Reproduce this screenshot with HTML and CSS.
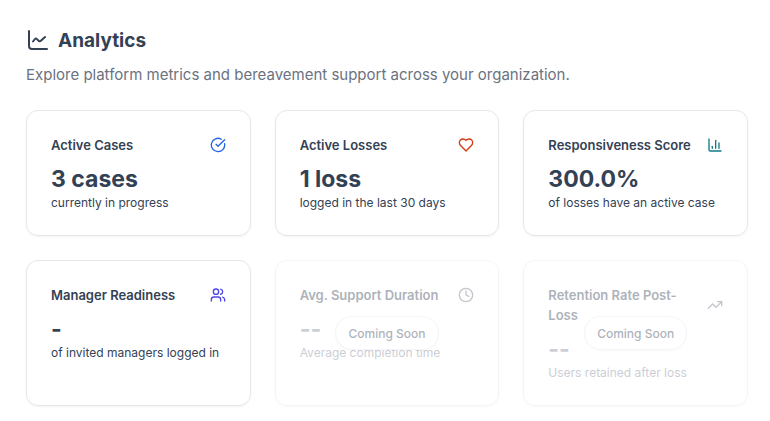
FILE: index.html
```html
<!DOCTYPE html>
<html lang="en">
<head>
<meta charset="utf-8">
<title>Analytics</title>
<link rel="stylesheet" href="styles.css">
</head>
<body>
<main class="page">
  <header class="page-header">
    <h1 class="title">
      <svg class="title-icon" viewBox="0 0 24 24"><path d="M3 2v15a3 3 0 0 0 3 3h15"/><path class="trend" d="M7 12.500l2-2.500c.5-.6 1.200-.6 1.700-.1l2.200 2.100c.5.500 1.200.5 1.700-.1L19 8"/></svg>
      Analytics
    </h1>
    <p class="subtitle">Explore platform metrics and bereavement support across your organization.</p>
  </header>
  <section class="cards">
    <article class="card">
      <div class="card-head"><h2>Active Cases</h2>
        <svg class="icon blue" viewBox="0 0 24 24"><path d="M21.801 10A10 10 0 1 1 17 3.335"/><path d="m9 11 3 3L22 4"/></svg></div>
      <p class="value">3 cases</p>
      <p class="note">currently in progress</p>
    </article>
    <article class="card">
      <div class="card-head"><h2>Active Losses</h2>
        <svg class="icon red" viewBox="0 0 24 24"><path d="M19 14c1.490-1.460 3-3.210 3-5.500A5.500 5.500 0 0 0 16.500 3c-1.760 0-3 .5-4.500 2-1.500-1.500-2.740-2-4.500-2A5.500 5.500 0 0 0 2 8.500c0 2.300 1.500 4.050 3 5.500l7 7Z"/></svg></div>
      <p class="value">1 loss</p>
      <p class="note">logged in the last 30 days</p>
    </article>
    <article class="card">
      <div class="card-head"><h2>Responsiveness Score</h2>
        <svg class="icon teal" viewBox="0 0 24 24"><path d="M3 3v16a2 2 0 0 0 2 2h16"/><path d="M18 17V9"/><path d="M13 17V5"/><path d="M8 17v-3"/></svg></div>
      <p class="value">300.0%</p>
      <p class="note">of losses have an active case</p>
    </article>
    <article class="card">
      <div class="card-head"><h2>Manager Readiness</h2>
        <svg class="icon indigo" viewBox="0 0 24 24"><path d="M16 21v-2a4 4 0 0 0-4-4H6a4 4 0 0 0-4 4v2"/><circle cx="9" cy="7" r="4"/><path d="M22 21v-2a4 4 0 0 0-3-3.870"/><path d="M16 3.130a4 4 0 0 1 0 7.750"/></svg></div>
      <p class="value">-</p>
      <p class="note">of invited managers logged in</p>
    </article>
    <article class="card soon">
      <div class="card-head"><h2>Avg. Support Duration</h2>
        <svg class="icon gray" viewBox="0 0 24 24"><circle cx="12" cy="12" r="10"/><path d="M12 6v6l4 2"/></svg></div>
      <p class="value">--</p>
      <p class="note">Average completion time</p>
      <div class="overlay"><span class="badge">Coming Soon</span></div>
    </article>
    <article class="card soon">
      <div class="card-head"><h2>Retention Rate Post-Loss</h2>
        <svg class="icon gray" viewBox="0 0 24 24"><path d="M22 7 13.500 15.500l-5-5L2 17"/><path d="M16 7h6v6"/></svg></div>
      <p class="value">--</p>
      <p class="note">Users retained after loss</p>
      <div class="overlay"><span class="badge">Coming Soon</span></div>
    </article>
  </section>
</main>
</body>
</html>
```
FILE: styles.css
```css
* { box-sizing: border-box; }
body, h1, h2, p { margin: 0; }
body {
  background: #fff;
  color: #334155;
  font-family: Inter, "Liberation Sans", sans-serif;
}
svg {
  fill: none;
  stroke: currentColor;
  stroke-width: 2;
  stroke-linecap: round;
  stroke-linejoin: round;
  flex: none;
}
.page { padding: 27px 22px 15px 26px; }
.title {
  display: flex;
  align-items: center;
  gap: 8px;
  font-size: 19px;
  line-height: 28px;
  font-weight: 700;
}
.title-icon { width: 24px; height: 24px; }
.subtitle {
  margin-top: 8px;
  font-size: 15px;
  line-height: 24px;
  color: #6b7280;
}
.cards {
  display: grid;
  grid-template-columns: repeat(3, minmax(0, 1fr));
  gap: 24px;
  margin-top: 23px;
}
.card {
  position: relative;
  padding: 24px;
  border: 1px solid #e5e7eb;
  border-radius: 12px;
  box-shadow: 0 1px 2px rgba(0, 0, 0, 0.05);
}
.card-head {
  display: flex;
  align-items: center;
  justify-content: space-between;
  gap: 8px;
  padding-bottom: 9px;
}
h2 {
  font-size: 13px;
  line-height: 20px;
  font-weight: 600;
}
.icon { width: 16px; height: 16px; }
.blue { color: #2563eb; }
.red { color: #d4380d; }
.teal { color: #0f7c86; }
.indigo { color: #4f46e5; }
.gray { color: #6b7280; }
.value { font-size: 23px; line-height: 31px; font-weight: 700; }
.note { font-size: 12px; line-height: 16px; }
.soon { opacity: 0.4; }
.soon .value, .soon .note { color: #7c8698; }
.overlay {
  position: absolute;
  inset: 0;
  display: flex;
  align-items: center;
  justify-content: center;
}
.badge {
  padding: 9px 12px 7px;
  border: 1px solid #e5e7eb;
  border-radius: 999px;
  background: #fff;
  box-shadow: 0 1px 2px rgba(0, 0, 0, 0.05);
  font-size: 12px;
  line-height: 16px;
  font-weight: 500;
}
```
